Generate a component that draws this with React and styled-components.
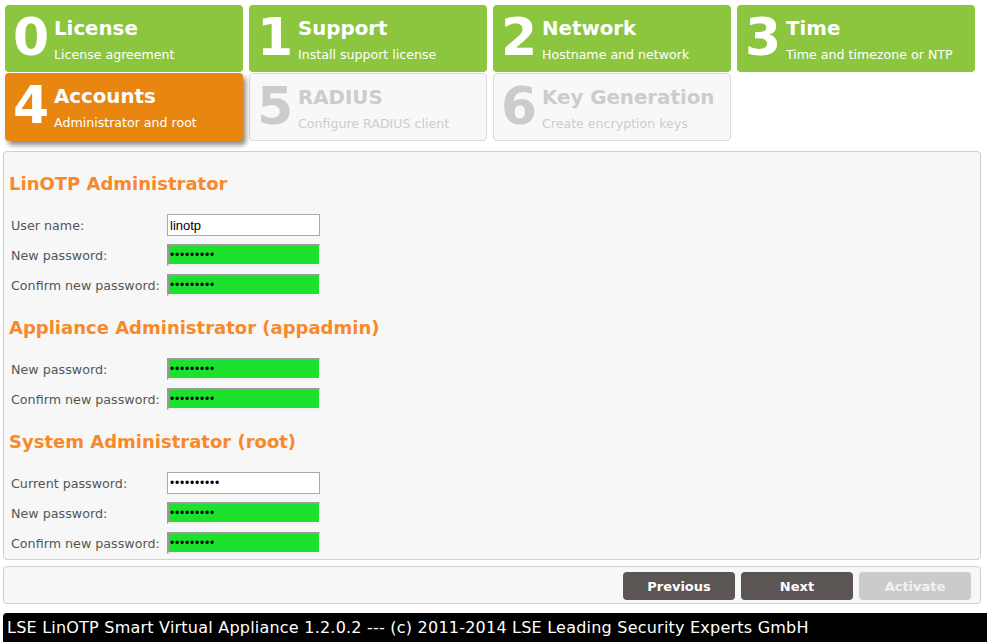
import React from "react";
import styled, { createGlobalStyle, css } from "styled-components";

const Global = createGlobalStyle`
  html, body { margin: 0; padding: 0; background: #ffffff; }
  body { font-family: "DejaVu Sans", Verdana, sans-serif; }
  * { box-sizing: border-box; }
`;

const Page = styled.div`
  width: 987px;
  height: 642px;
  overflow: hidden;
  display: flex;
  flex-direction: column;
`;

const TileGrid = styled.div`
  display: grid;
  grid-template-columns: repeat(4, 238px);
  grid-auto-rows: 67px;
  column-gap: 6px;
  row-gap: 1px;
  margin: 5px 0 0 5px;
`;

const Tile = styled.div`
  display: flex;
  align-items: flex-start;
  padding-left: 8px;
  border-radius: 4px;
  color: #fff;
  ${(p) =>
    p.$state === "done" &&
    css`
      background: #8cc63f;
    `}
  ${(p) =>
    p.$state === "active" &&
    css`
      background: #e8860f;
      height: 68px;
      box-shadow: 3px 4px 5px rgba(0, 0, 0, 0.45);
      position: relative;
      z-index: 1;
    `}
  ${(p) =>
    p.$state === "todo" &&
    css`
      background: #f8f8f8;
      border: 1px solid #dcdcdc;
      height: 68px;
      padding-left: 7px;
      color: #cccccc;
    `}
`;

const TileNum = styled.div`
  width: 41px;
  font-size: 52px;
  font-weight: bold;
  line-height: 52px;
  padding-top: 6px;
  flex: none;
`;

const TileText = styled.div`
  display: flex;
  flex-direction: column;
  padding-top: 12px;
`;

const TileTitle = styled.div`
  font-size: 19.8px;
  font-weight: bold;
  line-height: 24px;
`;

const TileSub = styled.div`
  font-size: 12.6px;
  line-height: 16px;
  margin-top: 6px;
`;

const Panel = styled.div`
  margin: 11px 6px 0 3px;
  border: 1px solid #cfcfcf;
  border-radius: 4px;
  background: #f7f7f7;
  padding: 4px 5px 1px;
`;

const Heading = styled.h2`
  margin: 16px 0 15px;
  padding-top: 1px;
  font-size: 18px;
  line-height: 22px;
  font-weight: bold;
  color: #f7892b;
`;

const Row = styled.div`
  display: flex;
  align-items: center;
  height: 30px;
`;

const Label = styled.label`
  width: 158px;
  padding-left: 2px;
  font-size: 12.7px;
  color: #555;
`;

const Field = styled.input`
  width: 153px;
  height: 22px;
  margin: 0;
  padding: 0 2px;
  font-family: "Liberation Sans", Arial, sans-serif;
  font-size: 13px;
  color: #000;
  outline: none;
  ${(p) =>
    p.$ok
      ? css`
          background: #1ce22f;
          border-style: solid;
          border-width: 2px 1px 2px 2px;
          border-color: #9a9a9a #efefef #efefef #9a9a9a;
          padding-left: 1px;
        `
      : css`
          background: #fff;
          border: 1px solid #a9a9a9;
        `}
  &[type="password"] {
    letter-spacing: 0.8px;
    font-size: 12px;
  }
`;

const ButtonBar = styled.div`
  margin: 6px 6px 0 3px;
  border: 1px solid #cfcfcf;
  border-radius: 4px;
  background: #f7f7f7;
  padding: 5px 9px 3px 0;
  display: flex;
  justify-content: flex-end;
  gap: 6px;
`;

const Button = styled.button`
  width: 112px;
  height: 28px;
  border: none;
  border-radius: 4px;
  font-family: "DejaVu Sans", Verdana, sans-serif;
  font-size: 13px;
  font-weight: bold;
  color: ${(p) => (p.disabled ? "#f2f2f2" : "#fff")};
  background: ${(p) => (p.disabled ? "#cbcbcb" : "#5b5554")};
  padding: 0;
`;

const Footer = styled.div`
  margin: 9px 0 0 3px;
  height: 29px;
  background: #000;
  color: #fff;
  border-radius: 4px 0 0 0;
  font-size: 16px;
  letter-spacing: 0.22px;
  line-height: 29px;
  padding-left: 4px;
  white-space: nowrap;
`;

const tiles = [
  { n: "0", t: "License", s: "License agreement", st: "done" },
  { n: "1", t: "Support", s: "Install support license", st: "done" },
  { n: "2", t: "Network", s: "Hostname and network", st: "done" },
  { n: "3", t: "Time", s: "Time and timezone or NTP", st: "done" },
  { n: "4", t: "Accounts", s: "Administrator and root", st: "active" },
  { n: "5", t: "RADIUS", s: "Configure RADIUS client", st: "todo" },
  { n: "6", t: "Key Generation", s: "Create encryption keys", st: "todo" },
];

const sections = [
  {
    title: "LinOTP Administrator",
    rows: [
      { l: "User name:", type: "text", v: "linotp" },
      { l: "New password:", type: "password", v: "123456789", ok: true },
      { l: "Confirm new password:", type: "password", v: "123456789", ok: true },
    ],
  },
  {
    title: "Appliance Administrator (appadmin)",
    rows: [
      { l: "New password:", type: "password", v: "123456789", ok: true },
      { l: "Confirm new password:", type: "password", v: "123456789", ok: true },
    ],
  },
  {
    title: "System Administrator (root)",
    rows: [
      { l: "Current password:", type: "password", v: "1234567890" },
      { l: "New password:", type: "password", v: "123456789", ok: true },
      { l: "Confirm new password:", type: "password", v: "123456789", ok: true },
    ],
  },
];

export default function App() {
  return (
    <Page>
      <Global />
      <TileGrid>
        {tiles.map((t) => (
          <Tile key={t.n} $state={t.st}>
            <TileNum>{t.n}</TileNum>
            <TileText>
              <TileTitle>{t.t}</TileTitle>
              <TileSub>{t.s}</TileSub>
            </TileText>
          </Tile>
        ))}
      </TileGrid>
      <Panel>
        {sections.map((s) => (
          <section key={s.title}>
            <Heading>{s.title}</Heading>
            {s.rows.map((r, i) => (
              <Row key={i}>
                <Label>{r.l}</Label>
                <Field type={r.type} defaultValue={r.v} $ok={r.ok} readOnly />
              </Row>
            ))}
          </section>
        ))}
      </Panel>
      <ButtonBar>
        <Button>Previous</Button>
        <Button>Next</Button>
        <Button disabled>Activate</Button>
      </ButtonBar>
      <Footer>
        LSE LinOTP Smart Virtual Appliance 1.2.0.2 --- (c) 2011-2014 LSE Leading Security Experts GmbH
      </Footer>
    </Page>
  );
}
